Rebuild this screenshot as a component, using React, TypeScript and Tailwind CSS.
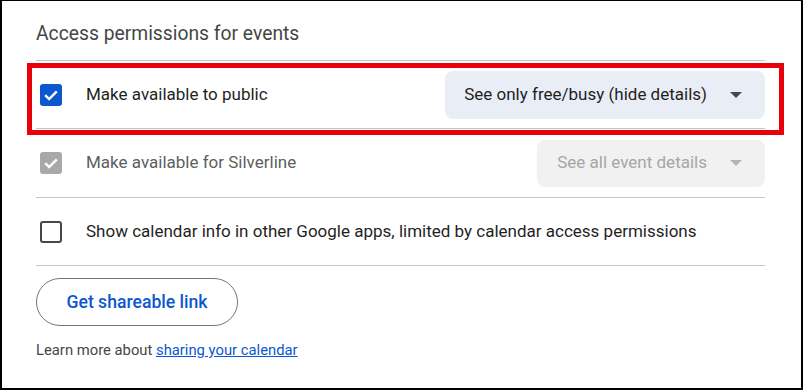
import React from "react";

const font = { fontFamily: "Roboto, 'Noto Sans', Arial, sans-serif" };

function Check({ color }: { color: string }) {
  return (
    <svg width="22" height="22" viewBox="0 0 22 22" className="block">
      <rect x="0" y="0" width="22" height="22" rx="3" fill={color} />
      <path d="M5.2 11.2 L9.1 15 L16.8 7.4" fill="none" stroke="#fff" strokeWidth="2.4" />
    </svg>
  );
}

function Arrow({ color }: { color: string }) {
  return (
    <svg width="12" height="6" viewBox="0 0 12 6" className="block">
      <path d="M0 0 L12 0 L6 6 Z" fill={color} />
    </svg>
  );
}

export default function App() {
  return (
    <div
      className="relative w-[803px] h-[390px] bg-white border-black border-x-2 border-b-2 border-t overflow-hidden"
      style={font}
    >
      <div className="pl-[34px] pr-[36px]">
        <div className="h-[60px] border-b border-[#c4c7c5] pt-[20px]">
          <div className="text-[19.3px] leading-[26px] text-[#444746]">Access permissions for events</div>
        </div>

        <div className="h-[68px] border-b border-[#c4c7c5] flex items-center">
          <div className="ml-[4px] w-[22px]">
            <Check color="#0b57d0" />
          </div>
          <div className="ml-[24px] text-[17px] text-[#1f1f1f]">Make available to public</div>
          <div className="ml-auto h-[48px] rounded-[8px] bg-[#e9eef6] flex items-center pl-[19px] pr-[23px] gap-[23px]">
            <span className="text-[17px] text-[#1f1f1f]">See only free/busy (hide details)</span>
            <Arrow color="#444746" />
          </div>
        </div>

        <div className="h-[69px] border-b border-[#c4c7c5] flex items-center">
          <div className="ml-[4px] w-[22px]">
            <Check color="#a8a8a8" />
          </div>
          <div className="ml-[24px] text-[17px] text-[#5c5f5e]">Make available for Silverline</div>
          <div className="ml-auto h-[47px] rounded-[8px] bg-[#f1f1f1] flex items-center pl-[20px] pr-[23px] gap-[23px]">
            <span className="text-[17px] text-[#a6a6a6]">See all event details</span>
            <Arrow color="#b3b3b3" />
          </div>
        </div>

        <div className="h-[68px] border-b border-[#c4c7c5] flex items-center">
          <div className="ml-[4px] w-[22px] h-[22px] rounded-[3px] border-2 border-[#444746]" />
          <div className="ml-[24px] text-[17px] text-[#1f1f1f]">
            Show calendar info in other Google apps, limited by calendar access permissions
          </div>
        </div>

        <div className="mt-[12px] w-[202px] h-[48px] rounded-full border border-[#747775] flex items-center justify-center">
          <span className="text-[17.6px] font-medium text-[#0b57d0]">Get shareable link</span>
        </div>

        <div className="mt-[14px] text-[14.8px] leading-[20px] text-[#444746]">
          Learn more about{" "}
          <span className="text-[#0b57d0] underline">sharing your calendar</span>
        </div>
      </div>

      <div className="absolute left-[25px] top-[62px] w-[757px] h-[72px] border-[5px] border-[#e8000b] pointer-events-none" />
    </div>
  );
}
